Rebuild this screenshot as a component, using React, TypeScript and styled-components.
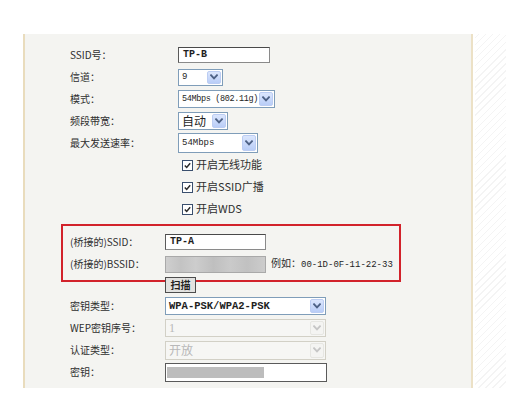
import React from "react";
import styled, { createGlobalStyle, css } from "styled-components";

const GlobalStyle = createGlobalStyle`
  html, body {
    margin: 0;
    padding: 0;
    background: #fff;
  }
  body {
    font-family: "Noto Sans CJK SC", "Liberation Sans", sans-serif;
    color: #2d2d2d;
  }
`;

const Page = styled.div`
  display: flex;
  align-items: stretch;
  width: 506px;
  height: 402px;
  padding-top: 34px;
  box-sizing: border-box;
`;

const Panel = styled.div`
  position: relative;
  margin-left: 23px;
  width: 450px;
  height: 354px;
  box-sizing: border-box;
  background: #f4f4f1;
  border-left: 2px solid #e9dcbd;
  border-right: 2px solid #ece1c6;
  padding: 10px 0 0 45px;
  display: flex;
  flex-direction: column;
`;

const Stripes = styled.div`
  flex: 1;
  height: 354px;
  margin-left: 2px;
  background: repeating-linear-gradient(
    -45deg,
    #ffffff 0px,
    #ffffff 4px,
    #f4f4f4 4px,
    #f4f4f4 5px
  );
`;

const Section = styled.div<{ $gap?: number }>`
  display: flex;
  flex-direction: column;
  margin-top: ${(p) => p.$gap ?? 0}px;
`;

const Row = styled.div<{ $label: number; $h?: number }>`
  display: grid;
  grid-template-columns: ${(p) => p.$label}px auto;
  align-items: center;
  height: ${(p) => p.$h ?? 22}px;
`;

const Label = styled.span`
  font-size: 10px;
  line-height: 1.2;
  white-space: nowrap;
  color: #2f2f2f;
`;

const TextInput = styled.div<{ $w: number; $h?: number }>`
  display: flex;
  align-items: center;
  width: ${(p) => p.$w}px;
  height: ${(p) => p.$h ?? 16}px;
  box-sizing: border-box;
  background: #fff;
  border: 1px solid #8a8a8a;
  border-top-color: #4a4a4a;
  border-left-color: #5a5a5a;
  padding-left: 4px;
`;

const Value = styled.span<{
  $size?: number;
  $bold?: boolean;
  $cjk?: boolean;
  $muted?: boolean;
  $serif?: boolean;
  $tight?: boolean;
}>`
  font-family: ${(p) =>
    p.$cjk
      ? `"Noto Sans CJK SC", sans-serif`
      : p.$serif
      ? `"Liberation Serif", serif`
      : `"Liberation Mono", "DejaVu Sans Mono", monospace`};
  font-size: ${(p) => p.$size ?? 9}px;
  font-weight: ${(p) => (p.$bold ? 700 : 400)};
  letter-spacing: ${(p) => (p.$tight ? "-0.35px" : "normal")};
  color: ${(p) => (p.$muted ? "#b8b8b8" : "#1e1e1e")};
  line-height: 1.2;
  white-space: nowrap;
`;

const SelectBox = styled.div<{ $w: number; $h?: number; $off?: boolean }>`
  display: flex;
  align-items: center;
  justify-content: space-between;
  width: ${(p) => p.$w}px;
  height: ${(p) => p.$h ?? 17}px;
  box-sizing: border-box;
  background: ${(p) => (p.$off ? "#f6f6f4" : "#fff")};
  border: 1px solid ${(p) => (p.$off ? "#d2d0c6" : "#7f9db9")};
  padding: 1px 1px 1px 3px;
`;

const ArrowBox = styled.span<{ $off?: boolean }>`
  display: flex;
  flex: 0 0 14px;
  align-items: center;
  justify-content: center;
  height: 100%;
  box-sizing: border-box;
  border-radius: 2px;
  ${(p) =>
    p.$off
      ? css`
          background: #f4f4f2;
          border: 1px solid #e6e6e2;
        `
      : css`
          background: linear-gradient(#dbe6fd, #b9cdf7);
          border: 1px solid #bccdf3;
        `}
`;

const Chevron = ({ off }: { off?: boolean }) => (
  <svg width="8" height="6" viewBox="0 0 8 6">
    <path
      d="M1 1.2 L4 4.4 L7 1.2"
      fill="none"
      stroke={off ? "#c6c6c6" : "#4d6185"}
      strokeWidth="1.8"
      strokeLinecap="square"
    />
  </svg>
);

const Select = ({
  w,
  h,
  off,
  children,
}: {
  w: number;
  h?: number;
  off?: boolean;
  children: React.ReactNode;
}) => (
  <SelectBox $w={w} $h={h} $off={off}>
    {children}
    <ArrowBox $off={off}>
      <Chevron off={off} />
    </ArrowBox>
  </SelectBox>
);

const CheckLine = styled.label`
  display: flex;
  align-items: center;
  gap: 3px;
  margin-left: 4px;
`;

const Box = styled.span`
  display: flex;
  align-items: center;
  justify-content: center;
  width: 11px;
  height: 11px;
  box-sizing: border-box;
  background: #fff;
  border: 1px solid #3a4f6e;
`;

const CheckText = styled.span`
  font-size: 11px;
  line-height: 1.2;
  color: #2f2f2f;
  white-space: nowrap;
`;

const Check = ({ children }: { children: React.ReactNode }) => (
  <CheckLine>
    <Box>
      <svg width="7" height="7" viewBox="0 0 7 7">
        <path d="M0.8 3.4 L2.7 5.4 L6.2 1.2" fill="none" stroke="#2b2b2b" strokeWidth="1.5" />
      </svg>
    </Box>
    <CheckText>{children}</CheckText>
  </CheckLine>
);

const Blurred = styled.div`
  width: 101px;
  height: 17px;
  box-sizing: border-box;
  border: 1px solid #a9a9a9;
  background: linear-gradient(
    90deg,
    #cfcfcf 0%,
    #c3c3c3 15%,
    #cdcdcd 30%,
    #bfbfbf 48%,
    #cacaca 65%,
    #c1c1c1 82%,
    #cccccc 100%
  );
  filter: blur(0.4px);
`;

const HintWrap = styled.div`
  display: flex;
  align-items: center;
  gap: 5px;
`;

const ScanButton = styled.button`
  position: relative;
  z-index: 2;
  width: 31px;
  height: 16px;
  padding: 0;
  box-sizing: border-box;
  border: 1px solid #4d4d4d;
  background: #e2e2e0;
  font-family: "Noto Sans CJK SC", sans-serif;
  font-size: 10px;
  font-weight: 700;
  line-height: 1;
  color: #222;
`;

const KeyInput = styled(TextInput)`
  padding-left: 1px;
  border-color: #5a5a5a;
`;

const KeyFill = styled.span`
  display: block;
  width: 97px;
  height: 11px;
  background: #bdbdbd;
`;

const RedFrame = styled.div`
  position: absolute;
  z-index: 1;
  left: 36px;
  top: 190px;
  width: 340px;
  height: 58px;
  box-sizing: border-box;
  border: 2px solid #d2222b;
  pointer-events: none;
`;

export default function App() {
  return (
    <>
      <GlobalStyle />
      <Page>
        <Panel>
          <Section>
            <Row $label={108}>
              <Label>SSID号：</Label>
              <TextInput $w={92}>
                <Value $bold $size={10}>TP-B</Value>
              </TextInput>
            </Row>
            <Row $label={108}>
              <Label>信道：</Label>
              <Select w={45}>
                <Value>9</Value>
              </Select>
            </Row>
            <Row $label={108}>
              <Label>模式：</Label>
              <Select w={97} h={18}>
                <Value $size={8.5} $tight>54Mbps (802.11g)</Value>
              </Select>
            </Row>
            <Row $label={108}>
              <Label>频段带宽：</Label>
              <Select w={50} h={18}>
                <Value $cjk $size={12}>自动</Value>
              </Select>
            </Row>
            <Row $label={108}>
              <Label>最大发送速率：</Label>
              <Select w={80} h={20}>
                <Value>54Mbps</Value>
              </Select>
            </Row>
            <Row $label={108}>
              <span />
              <Check>开启无线功能</Check>
            </Row>
            <Row $label={108}>
              <span />
              <Check>开启SSID广播</Check>
            </Row>
            <Row $label={108}>
              <span />
              <Check>开启WDS</Check>
            </Row>
          </Section>

          <Section $gap={11}>
            <Row $label={95}>
              <Label>(桥接的)SSID：</Label>
              <TextInput $w={101}>
                <Value $bold $size={10}>TP-A</Value>
              </TextInput>
            </Row>
            <Row $label={95}>
              <Label>(桥接的)BSSID：</Label>
              <HintWrap>
                <Blurred />
                <Label>
                  例如：<Value $size={9}>00-1D-0F-11-22-33</Value>
                </Label>
              </HintWrap>
            </Row>
            <Row $label={95} $h={20}>
              <span />
              <ScanButton type="button">扫描</ScanButton>
            </Row>
            <Row $label={95}>
              <Label>密钥类型：</Label>
              <Select w={161} h={18}>
                <Value $bold $size={10.5}>WPA-PSK/WPA2-PSK</Value>
              </Select>
            </Row>
            <Row $label={95}>
              <Label>WEP密钥序号：</Label>
              <Select w={161} h={18} off>
                <Value $muted $serif $size={12}>1</Value>
              </Select>
            </Row>
            <Row $label={95}>
              <Label>认证类型：</Label>
              <Select w={161} h={19} off>
                <Value $cjk $muted $size={12}>开放</Value>
              </Select>
            </Row>
            <Row $label={95}>
              <Label>密钥：</Label>
              <KeyInput $w={162} $h={19}>
                <KeyFill />
              </KeyInput>
            </Row>
          </Section>

          <RedFrame />
        </Panel>
        <Stripes />
      </Page>
    </>
  );
}
